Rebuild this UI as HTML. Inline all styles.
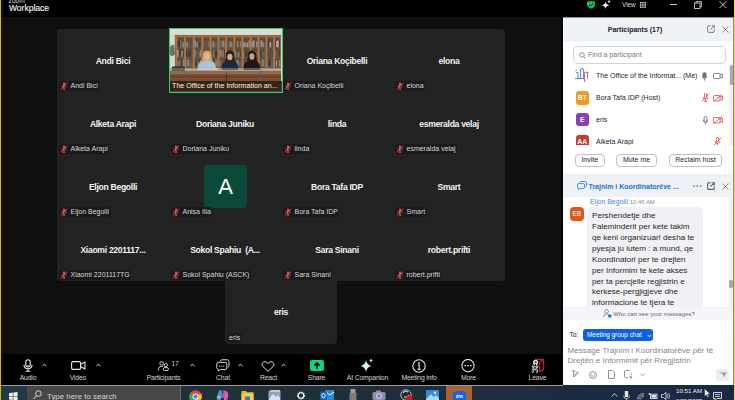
<!DOCTYPE html>
<html><head><meta charset="utf-8">
<style>
*{margin:0;padding:0;box-sizing:border-box}
html,body{width:735px;height:400px;overflow:hidden;background:#0f0f0f;font-family:"Liberation Sans",sans-serif;position:relative}
.a{position:absolute}
#top{left:0;top:0;width:735px;height:17px;background:#000}
#grid{left:57px;top:29px;width:448px;height:252px;background:#232323;border-radius:4px}
#eris{left:225px;top:276px;width:112px;height:68px;background:#232323;border-radius:0 0 4px 4px}
.tn{position:absolute;text-align:center;color:#f2f2f2;font-weight:bold;font-size:8.6px;line-height:10px;letter-spacing:-0.3px;white-space:nowrap}
.lb{position:absolute;height:10.5px;background:#1a1a1a;border-radius:3px;color:#d8d8d8;font-size:7px;line-height:10.5px;padding:0 1.5px 0 0;white-space:nowrap;display:flex;align-items:center}
.lb .mo{margin:0 2.5px 0 1px;flex:none}
.av{position:absolute;width:43px;height:43px;background:#0b4a3a;border-radius:4px;color:#fff;font-size:22px;line-height:43px;text-align:center}
#tb{left:0;top:354px;width:563px;height:31px;background:#000}
.tl{position:absolute;color:#d4d4d4;font-size:6.8px;line-height:8px;letter-spacing:-0.15px;white-space:nowrap;text-align:center}
#task{left:0;top:385px;width:735px;height:15px;background:#1d2a38}
#panel{left:563px;top:17px;width:170px;height:368px;background:#fff}
.ptx{color:#232333;font-size:7px;line-height:9px;white-space:nowrap}
.pav{width:13.5px;height:13.5px;border-radius:3px;color:#fff;font-weight:bold;font-size:6.8px;line-height:13.5px;text-align:center}
.pbtn{height:12.5px;border:1px solid #bfc0c8;border-radius:4px;color:#232333;font-size:7px;line-height:10.5px;text-align:center;white-space:nowrap}
.yl{background:#e3c400}
</style></head><body>
<div id="top" class="a"></div>

<div class="a" style="left:8.6px;top:-2.9px;color:#ddd;font-size:6.6px;line-height:7px">zoom</div>
<div class="a" style="left:9px;top:2.8px;color:#f0f0f0;font-size:8.5px;line-height:10px;-webkit-text-stroke:0.15px #f0f0f0">Workplace</div>
<svg class="a" style="left:586px;top:0.5px" width="10" height="8" viewBox="0 0 10 8"><path d="M5 0 Q7.4 1 9 0.8 V3.6 Q8.6 6.6 5 7.8 Q1.4 6.6 1 3.6 V0.8 Q2.6 1 5 0Z" fill="#1ec55a"/><path d="M3 3.8 L4.5 5.2 L7.2 2.4" stroke="#000" stroke-width="1" fill="none"/></svg>
<svg class="a" style="left:601px;top:0px" width="10" height="9" viewBox="0 0 10 9"><path d="M4.5 1.4 Q5 4.6 8.4 5.2 Q5 5.8 4.5 9 Q4 5.8 0.6 5.2 Q4 4.6 4.5 1.4Z" fill="#f4f4f4"/><path d="M8 0 Q8.3 1.3 9.6 1.6 Q8.3 1.9 8 3.2 Q7.7 1.9 6.4 1.6 Q7.7 1.3 8 0Z" fill="#f4f4f4"/></svg>
<div class="a" style="left:622px;top:0.8px;color:#d8d8d8;font-size:6.4px;line-height:7px">View</div>
<svg class="a" style="left:639.8px;top:1.6px" width="6" height="6" viewBox="0 0 6 6" fill="#ddd"><rect x="0" y="0" width="1.5" height="1.5"/><rect x="2.2" y="0" width="1.5" height="1.5"/><rect x="4.4" y="0" width="1.5" height="1.5"/><rect x="0" y="2.2" width="1.5" height="1.5"/><rect x="2.2" y="2.2" width="1.5" height="1.5"/><rect x="4.4" y="2.2" width="1.5" height="1.5"/><rect x="0" y="4.4" width="1.5" height="1.5"/><rect x="2.2" y="4.4" width="1.5" height="1.5"/><rect x="4.4" y="4.4" width="1.5" height="1.5"/></svg>
<div class="a" style="left:670px;top:4px;width:7px;height:1px;background:#ccc"></div>
<svg class="a" style="left:694px;top:1px" width="8" height="8" viewBox="0 0 8 8"><rect x="0.5" y="2" width="5.5" height="5.5" fill="none" stroke="#ccc" stroke-width="0.9"/><path d="M2 2 V0.6 H7.4 V6 H6" fill="none" stroke="#ccc" stroke-width="0.9"/></svg>
<svg class="a" style="left:719px;top:1px" width="8" height="7" viewBox="0 0 8 7"><path d="M0.5 0.2 L7.3 7 M7.3 0.2 L0.5 7" stroke="#ddd" stroke-width="0.9"/></svg>

<div id="grid" class="a"></div>
<div id="eris" class="a"></div>
<div class="tn" style="left:57px;top:55.5px;width:112px">Andi Bici</div>
<div class="lb" style="left:59px;top:80.5px"><svg class="mo" width="8" height="8" viewBox="0 0 8 8"><path d="M3 0.8 Q4 0 5 0.8 L5 3.6 Q4 4.6 3 3.6 Z" fill="#e0504e"/><path d="M1.8 3.2 Q2 5.4 4 5.5 Q6 5.4 6.2 3.2 M4 5.5 V7.3 M2.6 7.3 H5.4" stroke="#e0504e" stroke-width="0.9" fill="none"/><path d="M1 7.2 L7.2 0.6" stroke="#e0504e" stroke-width="1"/></svg><span>Andi Bici</span></div>
<div class="tn" style="left:281px;top:55.5px;width:112px">Oriana Koçibelli</div>
<div class="lb" style="left:283px;top:80.5px"><svg class="mo" width="8" height="8" viewBox="0 0 8 8"><path d="M3 0.8 Q4 0 5 0.8 L5 3.6 Q4 4.6 3 3.6 Z" fill="#e0504e"/><path d="M1.8 3.2 Q2 5.4 4 5.5 Q6 5.4 6.2 3.2 M4 5.5 V7.3 M2.6 7.3 H5.4" stroke="#e0504e" stroke-width="0.9" fill="none"/><path d="M1 7.2 L7.2 0.6" stroke="#e0504e" stroke-width="1"/></svg><span>Oriana Koçibelli</span></div>
<div class="tn" style="left:393px;top:55.5px;width:112px">elona</div>
<div class="lb" style="left:395px;top:80.5px"><svg class="mo" width="8" height="8" viewBox="0 0 8 8"><path d="M3 0.8 Q4 0 5 0.8 L5 3.6 Q4 4.6 3 3.6 Z" fill="#e0504e"/><path d="M1.8 3.2 Q2 5.4 4 5.5 Q6 5.4 6.2 3.2 M4 5.5 V7.3 M2.6 7.3 H5.4" stroke="#e0504e" stroke-width="0.9" fill="none"/><path d="M1 7.2 L7.2 0.6" stroke="#e0504e" stroke-width="1"/></svg><span>elona</span></div>
<div class="tn" style="left:57px;top:118.5px;width:112px">Alketa Arapi</div>
<div class="lb" style="left:59px;top:143.5px"><svg class="mo" width="8" height="8" viewBox="0 0 8 8"><path d="M3 0.8 Q4 0 5 0.8 L5 3.6 Q4 4.6 3 3.6 Z" fill="#e0504e"/><path d="M1.8 3.2 Q2 5.4 4 5.5 Q6 5.4 6.2 3.2 M4 5.5 V7.3 M2.6 7.3 H5.4" stroke="#e0504e" stroke-width="0.9" fill="none"/><path d="M1 7.2 L7.2 0.6" stroke="#e0504e" stroke-width="1"/></svg><span>Alketa Arapi</span></div>
<div class="tn" style="left:169px;top:118.5px;width:112px">Doriana Juniku</div>
<div class="lb" style="left:171px;top:143.5px"><svg class="mo" width="8" height="8" viewBox="0 0 8 8"><path d="M3 0.8 Q4 0 5 0.8 L5 3.6 Q4 4.6 3 3.6 Z" fill="#e0504e"/><path d="M1.8 3.2 Q2 5.4 4 5.5 Q6 5.4 6.2 3.2 M4 5.5 V7.3 M2.6 7.3 H5.4" stroke="#e0504e" stroke-width="0.9" fill="none"/><path d="M1 7.2 L7.2 0.6" stroke="#e0504e" stroke-width="1"/></svg><span>Doriana Juniku</span></div>
<div class="tn" style="left:281px;top:118.5px;width:112px">linda</div>
<div class="lb" style="left:283px;top:143.5px"><svg class="mo" width="8" height="8" viewBox="0 0 8 8"><path d="M3 0.8 Q4 0 5 0.8 L5 3.6 Q4 4.6 3 3.6 Z" fill="#e0504e"/><path d="M1.8 3.2 Q2 5.4 4 5.5 Q6 5.4 6.2 3.2 M4 5.5 V7.3 M2.6 7.3 H5.4" stroke="#e0504e" stroke-width="0.9" fill="none"/><path d="M1 7.2 L7.2 0.6" stroke="#e0504e" stroke-width="1"/></svg><span>linda</span></div>
<div class="tn" style="left:393px;top:118.5px;width:112px">esmeralda velaj</div>
<div class="lb" style="left:395px;top:143.5px"><svg class="mo" width="8" height="8" viewBox="0 0 8 8"><path d="M3 0.8 Q4 0 5 0.8 L5 3.6 Q4 4.6 3 3.6 Z" fill="#e0504e"/><path d="M1.8 3.2 Q2 5.4 4 5.5 Q6 5.4 6.2 3.2 M4 5.5 V7.3 M2.6 7.3 H5.4" stroke="#e0504e" stroke-width="0.9" fill="none"/><path d="M1 7.2 L7.2 0.6" stroke="#e0504e" stroke-width="1"/></svg><span>esmeralda velaj</span></div>
<div class="tn" style="left:57px;top:181.5px;width:112px">Eljon Begolli</div>
<div class="lb" style="left:59px;top:206.5px"><svg class="mo" width="8" height="8" viewBox="0 0 8 8"><path d="M3 0.8 Q4 0 5 0.8 L5 3.6 Q4 4.6 3 3.6 Z" fill="#e0504e"/><path d="M1.8 3.2 Q2 5.4 4 5.5 Q6 5.4 6.2 3.2 M4 5.5 V7.3 M2.6 7.3 H5.4" stroke="#e0504e" stroke-width="0.9" fill="none"/><path d="M1 7.2 L7.2 0.6" stroke="#e0504e" stroke-width="1"/></svg><span>Eljon Begolli</span></div>
<div class="av" style="left:204px;top:165px">A</div>
<div class="lb" style="left:171px;top:206.5px"><svg class="mo" width="8" height="8" viewBox="0 0 8 8"><path d="M3 0.8 Q4 0 5 0.8 L5 3.6 Q4 4.6 3 3.6 Z" fill="#e0504e"/><path d="M1.8 3.2 Q2 5.4 4 5.5 Q6 5.4 6.2 3.2 M4 5.5 V7.3 M2.6 7.3 H5.4" stroke="#e0504e" stroke-width="0.9" fill="none"/><path d="M1 7.2 L7.2 0.6" stroke="#e0504e" stroke-width="1"/></svg><span>Anisa Ilia</span></div>
<div class="tn" style="left:281px;top:181.5px;width:112px">Bora Tafa IDP</div>
<div class="lb" style="left:283px;top:206.5px"><svg class="mo" width="8" height="8" viewBox="0 0 8 8"><path d="M3 0.8 Q4 0 5 0.8 L5 3.6 Q4 4.6 3 3.6 Z" fill="#e0504e"/><path d="M1.8 3.2 Q2 5.4 4 5.5 Q6 5.4 6.2 3.2 M4 5.5 V7.3 M2.6 7.3 H5.4" stroke="#e0504e" stroke-width="0.9" fill="none"/><path d="M1 7.2 L7.2 0.6" stroke="#e0504e" stroke-width="1"/></svg><span>Bora Tafa IDP</span></div>
<div class="tn" style="left:393px;top:181.5px;width:112px">Smart</div>
<div class="lb" style="left:395px;top:206.5px"><svg class="mo" width="8" height="8" viewBox="0 0 8 8"><path d="M3 0.8 Q4 0 5 0.8 L5 3.6 Q4 4.6 3 3.6 Z" fill="#e0504e"/><path d="M1.8 3.2 Q2 5.4 4 5.5 Q6 5.4 6.2 3.2 M4 5.5 V7.3 M2.6 7.3 H5.4" stroke="#e0504e" stroke-width="0.9" fill="none"/><path d="M1 7.2 L7.2 0.6" stroke="#e0504e" stroke-width="1"/></svg><span>Smart</span></div>
<div class="tn" style="left:57px;top:244.5px;width:112px">Xiaomi 2201117...</div>
<div class="lb" style="left:59px;top:269.5px"><svg class="mo" width="8" height="8" viewBox="0 0 8 8"><path d="M3 0.8 Q4 0 5 0.8 L5 3.6 Q4 4.6 3 3.6 Z" fill="#e0504e"/><path d="M1.8 3.2 Q2 5.4 4 5.5 Q6 5.4 6.2 3.2 M4 5.5 V7.3 M2.6 7.3 H5.4" stroke="#e0504e" stroke-width="0.9" fill="none"/><path d="M1 7.2 L7.2 0.6" stroke="#e0504e" stroke-width="1"/></svg><span>Xiaomi 2201117TG</span></div>
<div class="tn" style="left:169px;top:244.5px;width:112px">Sokol Spahiu&nbsp; (A...</div>
<div class="lb" style="left:171px;top:269.5px"><svg class="mo" width="8" height="8" viewBox="0 0 8 8"><path d="M3 0.8 Q4 0 5 0.8 L5 3.6 Q4 4.6 3 3.6 Z" fill="#e0504e"/><path d="M1.8 3.2 Q2 5.4 4 5.5 Q6 5.4 6.2 3.2 M4 5.5 V7.3 M2.6 7.3 H5.4" stroke="#e0504e" stroke-width="0.9" fill="none"/><path d="M1 7.2 L7.2 0.6" stroke="#e0504e" stroke-width="1"/></svg><span>Sokol Spahiu (ASCK)</span></div>
<div class="tn" style="left:281px;top:244.5px;width:112px">Sara Sinani</div>
<div class="lb" style="left:283px;top:269.5px"><svg class="mo" width="8" height="8" viewBox="0 0 8 8"><path d="M3 0.8 Q4 0 5 0.8 L5 3.6 Q4 4.6 3 3.6 Z" fill="#e0504e"/><path d="M1.8 3.2 Q2 5.4 4 5.5 Q6 5.4 6.2 3.2 M4 5.5 V7.3 M2.6 7.3 H5.4" stroke="#e0504e" stroke-width="0.9" fill="none"/><path d="M1 7.2 L7.2 0.6" stroke="#e0504e" stroke-width="1"/></svg><span>Sara Sinani</span></div>
<div class="tn" style="left:393px;top:244.5px;width:112px">robert.prifti</div>
<div class="lb" style="left:395px;top:269.5px"><svg class="mo" width="8" height="8" viewBox="0 0 8 8"><path d="M3 0.8 Q4 0 5 0.8 L5 3.6 Q4 4.6 3 3.6 Z" fill="#e0504e"/><path d="M1.8 3.2 Q2 5.4 4 5.5 Q6 5.4 6.2 3.2 M4 5.5 V7.3 M2.6 7.3 H5.4" stroke="#e0504e" stroke-width="0.9" fill="none"/><path d="M1 7.2 L7.2 0.6" stroke="#e0504e" stroke-width="1"/></svg><span>robert.prifti</span></div>
<div class="a" style="left:168.5px;top:28px;width:114px;height:65px;border:1.6px solid #25d464;overflow:hidden;background:#d4d4d2">
<svg width="111" height="62" viewBox="170.1 29.6 111 62" style="position:absolute;left:0;top:0">
<rect x="169" y="29" width="113" height="64" fill="#d6d6d4"/>
<rect x="169" y="29" width="113" height="6" fill="#dedcd8"/>
<rect x="175" y="36" width="107" height="33" fill="#5a4c3e"/><rect x="177.0" y="41.0" width="1.0" height="7" fill="#6a5a44" opacity="0.7"/><rect x="178.0" y="42.0" width="1.0" height="6" fill="#2e2c2a" opacity="0.7"/><rect x="179.0" y="41.0" width="1.4" height="7" fill="#2e2c2a" opacity="0.7"/><rect x="180.4" y="41.0" width="1.0" height="7" fill="#a8a8a4" opacity="0.7"/><rect x="181.4" y="42.0" width="1.4" height="6" fill="#6a5a44" opacity="0.7"/><rect x="182.8" y="43.0" width="1.0" height="5" fill="#d0d0cc" opacity="0.7"/><rect x="177.0" y="48.0" width="7.2" height="1" fill="#6a5a40"/><rect x="177.0" y="50.5" width="1.8" height="7" fill="#d0d0cc" opacity="0.7"/><rect x="178.8" y="50.5" width="1.4" height="7" fill="#3a3a3a" opacity="0.7"/><rect x="180.2" y="50.5" width="1.0" height="7" fill="#3a3a3a" opacity="0.7"/><rect x="181.2" y="51.5" width="1.8" height="6" fill="#a8a8a4" opacity="0.7"/><rect x="183.0" y="52.5" width="1.2" height="5" fill="#3a3a3a" opacity="0.7"/><rect x="177.0" y="57.5" width="7.2" height="1" fill="#6a5a40"/><rect x="177.0" y="62.0" width="1.8" height="5" fill="#5a5e66" opacity="0.7"/><rect x="178.8" y="61.0" width="1.0" height="6" fill="#d0d0cc" opacity="0.7"/><rect x="179.8" y="60.0" width="1.8" height="7" fill="#4a5060" opacity="0.7"/><rect x="181.6" y="61.0" width="1.8" height="6" fill="#4a5060" opacity="0.7"/><rect x="183.4" y="60.0" width="0.8" height="7" fill="#d0d0cc" opacity="0.7"/><rect x="177.0" y="67.0" width="7.2" height="1" fill="#6a5a40"/><rect x="185.8" y="42.0" width="1.0" height="6" fill="#6a7a8a" opacity="0.7"/><rect x="186.8" y="43.0" width="1.0" height="5" fill="#d0d0cc" opacity="0.7"/><rect x="187.8" y="42.0" width="1.0" height="6" fill="#7a6850" opacity="0.7"/><rect x="188.8" y="41.0" width="1.4" height="7" fill="#5a5e66" opacity="0.7"/><rect x="190.2" y="41.0" width="1.4" height="7" fill="#4a5060" opacity="0.7"/><rect x="191.6" y="42.0" width="1.2" height="6" fill="#6a5a44" opacity="0.7"/><rect x="185.8" y="48.0" width="7.0" height="1" fill="#6a5a40"/><rect x="185.8" y="51.5" width="1.8" height="6" fill="#2e2c2a" opacity="0.7"/><rect x="187.6" y="51.5" width="1.0" height="6" fill="#7a6850" opacity="0.7"/><rect x="188.6" y="51.5" width="1.0" height="6" fill="#2e2c2a" opacity="0.7"/><rect x="189.6" y="50.5" width="1.8" height="7" fill="#3a3a3a" opacity="0.7"/><rect x="191.4" y="51.5" width="1.4" height="6" fill="#6a5a44" opacity="0.7"/><rect x="185.8" y="57.5" width="7.0" height="1" fill="#6a5a40"/><rect x="185.8" y="60.0" width="1.8" height="7" fill="#6a7a8a" opacity="0.7"/><rect x="187.6" y="60.0" width="1.8" height="7" fill="#b8a070" opacity="0.7"/><rect x="189.4" y="60.0" width="1.8" height="7" fill="#5a5e66" opacity="0.7"/><rect x="191.2" y="62.0" width="1.4" height="5" fill="#6a7a8a" opacity="0.7"/><rect x="185.8" y="67.0" width="7.0" height="1" fill="#6a5a40"/><rect x="194.4" y="41.0" width="1.4" height="7" fill="#d0d0cc" opacity="0.7"/><rect x="195.8" y="42.0" width="1.0" height="6" fill="#6a7a8a" opacity="0.7"/><rect x="196.8" y="43.0" width="1.4" height="5" fill="#a8a8a4" opacity="0.7"/><rect x="198.2" y="42.0" width="1.4" height="6" fill="#4a5060" opacity="0.7"/><rect x="199.6" y="43.0" width="1.0" height="5" fill="#2e2c2a" opacity="0.7"/><rect x="200.6" y="43.0" width="0.8" height="5" fill="#4a5060" opacity="0.7"/><rect x="194.4" y="48.0" width="7.0" height="1" fill="#6a5a40"/><rect x="194.4" y="50.5" width="1.8" height="7" fill="#8a8a84" opacity="0.7"/><rect x="196.2" y="51.5" width="1.8" height="6" fill="#6a5a44" opacity="0.7"/><rect x="198.0" y="52.5" width="1.0" height="5" fill="#5a5e66" opacity="0.7"/><rect x="199.0" y="52.5" width="1.0" height="5" fill="#6a7a8a" opacity="0.7"/><rect x="200.0" y="50.5" width="1.4" height="7" fill="#a8a8a4" opacity="0.7"/><rect x="194.4" y="57.5" width="7.0" height="1" fill="#6a5a40"/><rect x="194.4" y="61.0" width="1.0" height="6" fill="#5a5e66" opacity="0.7"/><rect x="195.4" y="61.0" width="1.8" height="6" fill="#3a3a3a" opacity="0.7"/><rect x="197.2" y="62.0" width="1.8" height="5" fill="#8a8a84" opacity="0.7"/><rect x="199.0" y="61.0" width="1.4" height="6" fill="#3a3a3a" opacity="0.7"/><rect x="200.4" y="61.0" width="1.0" height="6" fill="#d0d0cc" opacity="0.7"/><rect x="194.4" y="67.0" width="7.0" height="1" fill="#6a5a40"/><rect x="203.0" y="42.0" width="1.8" height="6" fill="#7a6850" opacity="0.7"/><rect x="204.8" y="41.0" width="1.8" height="7" fill="#6a5a44" opacity="0.7"/><rect x="206.6" y="41.0" width="1.0" height="7" fill="#6a5a44" opacity="0.7"/><rect x="207.6" y="42.0" width="1.4" height="6" fill="#7a6850" opacity="0.7"/><rect x="209.0" y="41.0" width="0.6" height="7" fill="#b8a070" opacity="0.7"/><rect x="203.0" y="48.0" width="6.6" height="1" fill="#6a5a40"/><rect x="203.0" y="51.5" width="1.4" height="6" fill="#5a5e66" opacity="0.7"/><rect x="204.4" y="51.5" width="1.8" height="6" fill="#6a5a44" opacity="0.7"/><rect x="206.2" y="52.5" width="1.4" height="5" fill="#4a5060" opacity="0.7"/><rect x="207.6" y="51.5" width="1.8" height="6" fill="#a8a8a4" opacity="0.7"/><rect x="203.0" y="57.5" width="6.6" height="1" fill="#6a5a40"/><rect x="203.0" y="60.0" width="1.4" height="7" fill="#2e2c2a" opacity="0.7"/><rect x="204.4" y="62.0" width="1.8" height="5" fill="#a8a8a4" opacity="0.7"/><rect x="206.2" y="60.0" width="1.8" height="7" fill="#8a8a84" opacity="0.7"/><rect x="208.0" y="61.0" width="1.4" height="6" fill="#7a6850" opacity="0.7"/><rect x="203.0" y="67.0" width="6.6" height="1" fill="#6a5a40"/><rect x="211.2" y="41.0" width="1.4" height="7" fill="#5a5e66" opacity="0.7"/><rect x="212.6" y="42.0" width="1.8" height="6" fill="#a8a8a4" opacity="0.7"/><rect x="214.4" y="43.0" width="1.8" height="5" fill="#7a6850" opacity="0.7"/><rect x="216.2" y="42.0" width="1.0" height="6" fill="#5a5e66" opacity="0.7"/><rect x="211.2" y="48.0" width="6.4" height="1" fill="#6a5a40"/><rect x="211.2" y="51.5" width="1.8" height="6" fill="#5a5e66" opacity="0.7"/><rect x="213.0" y="50.5" width="1.8" height="7" fill="#8a8a84" opacity="0.7"/><rect x="214.8" y="51.5" width="1.0" height="6" fill="#3a3a3a" opacity="0.7"/><rect x="215.8" y="51.5" width="1.4" height="6" fill="#2e2c2a" opacity="0.7"/><rect x="211.2" y="57.5" width="6.4" height="1" fill="#6a5a40"/><rect x="211.2" y="61.0" width="1.4" height="6" fill="#4a5060" opacity="0.7"/><rect x="212.6" y="62.0" width="1.0" height="5" fill="#2e2c2a" opacity="0.7"/><rect x="213.6" y="60.0" width="1.8" height="7" fill="#3a3a3a" opacity="0.7"/><rect x="215.4" y="60.0" width="1.4" height="7" fill="#b8a070" opacity="0.7"/><rect x="216.8" y="61.0" width="0.8" height="6" fill="#b8a070" opacity="0.7"/><rect x="211.2" y="67.0" width="6.4" height="1" fill="#6a5a40"/><rect x="219.2" y="43.0" width="1.4" height="5" fill="#7a6850" opacity="0.7"/><rect x="220.6" y="41.0" width="1.4" height="7" fill="#6a7a8a" opacity="0.7"/><rect x="222.0" y="41.0" width="1.0" height="7" fill="#8a8a84" opacity="0.7"/><rect x="223.0" y="41.0" width="1.4" height="7" fill="#b8a070" opacity="0.7"/><rect x="224.4" y="43.0" width="0.8" height="5" fill="#6a7a8a" opacity="0.7"/><rect x="219.2" y="48.0" width="6.0" height="1" fill="#6a5a40"/><rect x="219.2" y="50.5" width="1.4" height="7" fill="#7a6850" opacity="0.7"/><rect x="220.6" y="50.5" width="1.0" height="7" fill="#d0d0cc" opacity="0.7"/><rect x="221.6" y="52.5" width="1.4" height="5" fill="#6a7a8a" opacity="0.7"/><rect x="223.0" y="50.5" width="1.0" height="7" fill="#b8a070" opacity="0.7"/><rect x="224.0" y="50.5" width="1.2" height="7" fill="#3a3a3a" opacity="0.7"/><rect x="219.2" y="57.5" width="6.0" height="1" fill="#6a5a40"/><rect x="219.2" y="61.0" width="1.4" height="6" fill="#7a6850" opacity="0.7"/><rect x="220.6" y="60.0" width="1.0" height="7" fill="#8a8a84" opacity="0.7"/><rect x="221.6" y="62.0" width="1.8" height="5" fill="#4a5060" opacity="0.7"/><rect x="223.4" y="60.0" width="1.4" height="7" fill="#5a5e66" opacity="0.7"/><rect x="219.2" y="67.0" width="6.0" height="1" fill="#6a5a40"/><rect x="226.8" y="42.0" width="1.4" height="6" fill="#7a6850" opacity="0.7"/><rect x="228.2" y="42.0" width="1.4" height="6" fill="#4a5060" opacity="0.7"/><rect x="229.6" y="42.0" width="1.8" height="6" fill="#a8a8a4" opacity="0.7"/><rect x="231.4" y="43.0" width="1.4" height="5" fill="#b8a070" opacity="0.7"/><rect x="232.8" y="42.0" width="0.6" height="6" fill="#2e2c2a" opacity="0.7"/><rect x="226.8" y="48.0" width="6.6" height="1" fill="#6a5a40"/><rect x="226.8" y="51.5" width="1.8" height="6" fill="#6a5a44" opacity="0.7"/><rect x="228.6" y="52.5" width="1.8" height="5" fill="#a8a8a4" opacity="0.7"/><rect x="230.4" y="51.5" width="1.8" height="6" fill="#7a6850" opacity="0.7"/><rect x="232.2" y="50.5" width="1.2" height="7" fill="#5a5e66" opacity="0.7"/><rect x="226.8" y="57.5" width="6.6" height="1" fill="#6a5a40"/><rect x="226.8" y="61.0" width="1.8" height="6" fill="#b8a070" opacity="0.7"/><rect x="228.6" y="60.0" width="1.0" height="7" fill="#5a5e66" opacity="0.7"/><rect x="229.6" y="62.0" width="1.0" height="5" fill="#a8a8a4" opacity="0.7"/><rect x="230.6" y="60.0" width="1.0" height="7" fill="#6a5a44" opacity="0.7"/><rect x="231.6" y="61.0" width="1.0" height="6" fill="#2e2c2a" opacity="0.7"/><rect x="232.6" y="62.0" width="0.8" height="5" fill="#d0d0cc" opacity="0.7"/><rect x="226.8" y="67.0" width="6.6" height="1" fill="#6a5a40"/><rect x="235.0" y="43.0" width="1.8" height="5" fill="#3a3a3a" opacity="0.7"/><rect x="236.8" y="42.0" width="1.8" height="6" fill="#b8a070" opacity="0.7"/><rect x="238.6" y="43.0" width="1.8" height="5" fill="#6a5a44" opacity="0.7"/><rect x="240.4" y="42.0" width="1.2" height="6" fill="#a8a8a4" opacity="0.7"/><rect x="235.0" y="48.0" width="6.6" height="1" fill="#6a5a40"/><rect x="235.0" y="52.5" width="1.8" height="5" fill="#8a8a84" opacity="0.7"/><rect x="236.8" y="51.5" width="1.0" height="6" fill="#6a5a44" opacity="0.7"/><rect x="237.8" y="52.5" width="1.4" height="5" fill="#8a8a84" opacity="0.7"/><rect x="239.2" y="52.5" width="1.0" height="5" fill="#6a7a8a" opacity="0.7"/><rect x="240.2" y="52.5" width="1.4" height="5" fill="#3a3a3a" opacity="0.7"/><rect x="235.0" y="57.5" width="6.6" height="1" fill="#6a5a40"/><rect x="235.0" y="61.0" width="1.0" height="6" fill="#3a3a3a" opacity="0.7"/><rect x="236.0" y="61.0" width="1.0" height="6" fill="#7a6850" opacity="0.7"/><rect x="237.0" y="61.0" width="1.8" height="6" fill="#a8a8a4" opacity="0.7"/><rect x="238.8" y="62.0" width="1.4" height="5" fill="#5a5e66" opacity="0.7"/><rect x="240.2" y="60.0" width="1.4" height="7" fill="#6a5a44" opacity="0.7"/><rect x="235.0" y="67.0" width="6.6" height="1" fill="#6a5a40"/><rect x="243.2" y="43.0" width="1.4" height="5" fill="#d0d0cc" opacity="0.7"/><rect x="244.6" y="43.0" width="1.4" height="5" fill="#a8a8a4" opacity="0.7"/><rect x="246.0" y="43.0" width="1.0" height="5" fill="#6a7a8a" opacity="0.7"/><rect x="247.0" y="43.0" width="1.0" height="5" fill="#d0d0cc" opacity="0.7"/><rect x="248.0" y="41.0" width="1.0" height="7" fill="#6a7a8a" opacity="0.7"/><rect x="249.0" y="41.0" width="0.8" height="7" fill="#d0d0cc" opacity="0.7"/><rect x="243.2" y="48.0" width="6.6" height="1" fill="#6a5a40"/><rect x="243.2" y="52.5" width="1.4" height="5" fill="#8a8a84" opacity="0.7"/><rect x="244.6" y="51.5" width="1.0" height="6" fill="#4a5060" opacity="0.7"/><rect x="245.6" y="51.5" width="1.8" height="6" fill="#2e2c2a" opacity="0.7"/><rect x="247.4" y="51.5" width="1.4" height="6" fill="#5a5e66" opacity="0.7"/><rect x="248.8" y="51.5" width="1.0" height="6" fill="#4a5060" opacity="0.7"/><rect x="243.2" y="57.5" width="6.6" height="1" fill="#6a5a40"/><rect x="243.2" y="62.0" width="1.0" height="5" fill="#6a5a44" opacity="0.7"/><rect x="244.2" y="60.0" width="1.0" height="7" fill="#4a5060" opacity="0.7"/><rect x="245.2" y="60.0" width="1.0" height="7" fill="#3a3a3a" opacity="0.7"/><rect x="246.2" y="61.0" width="1.0" height="6" fill="#d0d0cc" opacity="0.7"/><rect x="247.2" y="60.0" width="1.8" height="7" fill="#6a5a44" opacity="0.7"/><rect x="249.0" y="60.0" width="0.8" height="7" fill="#a8a8a4" opacity="0.7"/><rect x="243.2" y="67.0" width="6.6" height="1" fill="#6a5a40"/><rect x="251.4" y="42.0" width="1.8" height="6" fill="#a8a8a4" opacity="0.7"/><rect x="253.2" y="41.0" width="1.4" height="7" fill="#d0d0cc" opacity="0.7"/><rect x="254.6" y="42.0" width="1.8" height="6" fill="#4a5060" opacity="0.7"/><rect x="256.4" y="42.0" width="1.2" height="6" fill="#d0d0cc" opacity="0.7"/><rect x="251.4" y="48.0" width="6.2" height="1" fill="#6a5a40"/><rect x="251.4" y="52.5" width="1.0" height="5" fill="#b8a070" opacity="0.7"/><rect x="252.4" y="51.5" width="1.8" height="6" fill="#2e2c2a" opacity="0.7"/><rect x="254.2" y="51.5" width="1.0" height="6" fill="#b8a070" opacity="0.7"/><rect x="255.2" y="52.5" width="1.4" height="5" fill="#a8a8a4" opacity="0.7"/><rect x="256.6" y="51.5" width="1.0" height="6" fill="#6a5a44" opacity="0.7"/><rect x="251.4" y="57.5" width="6.2" height="1" fill="#6a5a40"/><rect x="251.4" y="62.0" width="1.4" height="5" fill="#d0d0cc" opacity="0.7"/><rect x="252.8" y="62.0" width="1.8" height="5" fill="#7a6850" opacity="0.7"/><rect x="254.6" y="61.0" width="1.8" height="6" fill="#7a6850" opacity="0.7"/><rect x="256.4" y="60.0" width="1.0" height="7" fill="#8a8a84" opacity="0.7"/><rect x="251.4" y="67.0" width="6.2" height="1" fill="#6a5a40"/><rect x="259.2" y="41.0" width="1.8" height="7" fill="#6a7a8a" opacity="0.7"/><rect x="261.0" y="41.0" width="1.8" height="7" fill="#a8a8a4" opacity="0.7"/><rect x="262.8" y="43.0" width="1.4" height="5" fill="#b8a070" opacity="0.7"/><rect x="264.2" y="43.0" width="1.4" height="5" fill="#6a5a44" opacity="0.7"/><rect x="259.2" y="48.0" width="6.4" height="1" fill="#6a5a40"/><rect x="259.2" y="50.5" width="1.0" height="7" fill="#6a7a8a" opacity="0.7"/><rect x="260.2" y="51.5" width="1.8" height="6" fill="#3a3a3a" opacity="0.7"/><rect x="262.0" y="51.5" width="1.0" height="6" fill="#6a7a8a" opacity="0.7"/><rect x="263.0" y="52.5" width="1.0" height="5" fill="#7a6850" opacity="0.7"/><rect x="264.0" y="50.5" width="1.4" height="7" fill="#5a5e66" opacity="0.7"/><rect x="259.2" y="57.5" width="6.4" height="1" fill="#6a5a40"/><rect x="259.2" y="61.0" width="1.8" height="6" fill="#6a7a8a" opacity="0.7"/><rect x="261.0" y="60.0" width="1.0" height="7" fill="#6a5a44" opacity="0.7"/><rect x="262.0" y="60.0" width="1.8" height="7" fill="#b8a070" opacity="0.7"/><rect x="263.8" y="60.0" width="1.0" height="7" fill="#6a7a8a" opacity="0.7"/><rect x="264.8" y="62.0" width="0.8" height="5" fill="#6a5a44" opacity="0.7"/><rect x="259.2" y="67.0" width="6.4" height="1" fill="#6a5a40"/><rect x="267.2" y="41.0" width="1.4" height="7" fill="#3a3a3a" opacity="0.7"/><rect x="268.6" y="43.0" width="1.0" height="5" fill="#3a3a3a" opacity="0.7"/><rect x="269.6" y="43.0" width="1.8" height="5" fill="#d0d0cc" opacity="0.7"/><rect x="271.4" y="41.0" width="1.8" height="7" fill="#4a5060" opacity="0.7"/><rect x="267.2" y="48.0" width="6.0" height="1" fill="#6a5a40"/><rect x="267.2" y="51.5" width="1.4" height="6" fill="#2e2c2a" opacity="0.7"/><rect x="268.6" y="51.5" width="1.4" height="6" fill="#6a5a44" opacity="0.7"/><rect x="270.0" y="52.5" width="1.4" height="5" fill="#4a5060" opacity="0.7"/><rect x="271.4" y="52.5" width="1.8" height="5" fill="#4a5060" opacity="0.7"/><rect x="267.2" y="57.5" width="6.0" height="1" fill="#6a5a40"/><rect x="267.2" y="62.0" width="1.8" height="5" fill="#4a5060" opacity="0.7"/><rect x="269.0" y="60.0" width="1.8" height="7" fill="#2e2c2a" opacity="0.7"/><rect x="270.8" y="60.0" width="1.8" height="7" fill="#7a6850" opacity="0.7"/><rect x="272.6" y="62.0" width="0.6" height="5" fill="#7a6850" opacity="0.7"/><rect x="267.2" y="67.0" width="6.0" height="1" fill="#6a5a40"/><rect x="274.8" y="43.0" width="1.4" height="5" fill="#3a3a3a" opacity="0.7"/><rect x="276.2" y="42.0" width="1.0" height="6" fill="#d0d0cc" opacity="0.7"/><rect x="277.2" y="41.0" width="1.8" height="7" fill="#d0d0cc" opacity="0.7"/><rect x="279.0" y="41.0" width="1.4" height="7" fill="#3a3a3a" opacity="0.7"/><rect x="274.8" y="48.0" width="5.6" height="1" fill="#6a5a40"/><rect x="274.8" y="51.5" width="1.0" height="6" fill="#b8a070" opacity="0.7"/><rect x="275.8" y="50.5" width="1.0" height="7" fill="#6a5a44" opacity="0.7"/><rect x="276.8" y="52.5" width="1.4" height="5" fill="#6a5a44" opacity="0.7"/><rect x="278.2" y="50.5" width="1.4" height="7" fill="#4a5060" opacity="0.7"/><rect x="279.6" y="50.5" width="0.8" height="7" fill="#2e2c2a" opacity="0.7"/><rect x="274.8" y="57.5" width="5.6" height="1" fill="#6a5a40"/><rect x="274.8" y="62.0" width="1.4" height="5" fill="#5a5e66" opacity="0.7"/><rect x="276.2" y="61.0" width="1.0" height="6" fill="#d0d0cc" opacity="0.7"/><rect x="277.2" y="62.0" width="1.4" height="5" fill="#3a3a3a" opacity="0.7"/><rect x="278.6" y="61.0" width="1.8" height="6" fill="#b8a070" opacity="0.7"/><rect x="274.8" y="67.0" width="5.6" height="1" fill="#6a5a40"/><rect x="175.4" y="36" width="2" height="33" fill="#b07444"/><rect x="184.2" y="36" width="2" height="33" fill="#b07444"/><rect x="192.8" y="36" width="2" height="33" fill="#b07444"/><rect x="201.4" y="36" width="2" height="33" fill="#b07444"/><rect x="209.6" y="36" width="2" height="33" fill="#b07444"/><rect x="217.6" y="36" width="2" height="33" fill="#b07444"/><rect x="225.2" y="36" width="2" height="33" fill="#b07444"/><rect x="233.4" y="36" width="2" height="33" fill="#b07444"/><rect x="241.6" y="36" width="2" height="33" fill="#b07444"/><rect x="249.8" y="36" width="2" height="33" fill="#b07444"/><rect x="257.6" y="36" width="2" height="33" fill="#b07444"/><rect x="265.6" y="36" width="2" height="33" fill="#b07444"/><rect x="273.2" y="36" width="2" height="33" fill="#b07444"/><rect x="280.4" y="36" width="2" height="33" fill="#b07444"/><rect x="175" y="35.5" width="107" height="2.5" fill="#a06a3a"/>
<path d="M170 48 Q172 44 174.5 46 L175 55 L172 57 L170 55Z" fill="#3a4a30" opacity="0.7"/>
<rect x="172" y="67" width="13" height="6" rx="1" fill="#2a3038"/>
<g transform="translate(0,2.6)">
<path d="M197.5 70 Q197.5 60 202 59 L212 59 Q216.5 60 216.5 70Z" fill="#a8c4dc"/>
<path d="M203 55 Q202 48.5 207 48.5 Q212 48.5 211.5 55 L213.5 62 L210 59 L204 59 L200.5 62Z" fill="#c8a468"/>
<ellipse cx="207" cy="54.5" rx="2.7" ry="3.4" fill="#e0b894"/>
<path d="M221.5 68 Q221.5 60 226 59.5 L234 59.5 Q238.5 60 238.5 68Z" fill="#1c2640"/>
<path d="M226 55 Q225 48.5 230 48.5 Q235 48.5 234.5 55 L235.5 60 L224.5 60Z" fill="#2e2218"/>
<ellipse cx="230" cy="55" rx="2.6" ry="3.3" fill="#d2a888"/>
<path d="M243.5 68 Q243.5 60 248 59 L256 59 Q260.5 60 260.5 68Z" fill="#16161a"/>
<path d="M248 55 Q247 48.5 252 48.5 Q257 48.5 256.5 55 L258 63 L246 63Z" fill="#241a14"/>
<ellipse cx="252" cy="54.5" rx="2.5" ry="3.2" fill="#caa08a"/>
</g>
<rect x="169" y="68.5" width="113" height="3" fill="#8a8a88" opacity="0.6"/>
<rect x="198" y="68.8" width="20" height="2" fill="#d8d6d0" opacity="0.8"/>
<rect x="169" y="71.5" width="113" height="2.5" fill="#9a6440"/>
<rect x="169" y="74" width="113" height="20" fill="#7c4e2e"/>
<rect x="169" y="77" width="113" height="0.8" fill="#5a3620"/>
<rect x="226" y="74" width="1" height="8" fill="#4a2e1a"/>
<rect x="260.5" y="71" width="0.8" height="12" fill="#4060a0"/>
<rect x="186" y="72" width="0.8" height="10" fill="#4060a0"/>
</svg>
<div class="a" style="left:0;top:51.5px;width:112px;height:12px;background:rgba(30,22,14,0.74)"></div>
<div class="a" style="left:2.6px;top:52.2px;color:#f4f4f4;font-size:7.1px;line-height:11px;white-space:nowrap">The Office of the Information an...</div>
</div>
<div class="tn" style="left:225px;top:307px;width:112px">eris</div>
<div class="lb" style="left:227px;top:332.5px;padding:0 2px">eris</div>
<div id="tb" class="a"></div>
<svg class="a" style="left:22px;top:358.5px" width="12" height="13" viewBox="0 0 12 13"><rect x="3.8" y="0.8" width="4.4" height="7.2" rx="2.2" fill="none" stroke="#e6e6e6" stroke-width="1.1"/><path d="M5 6.6 H7" stroke="#2ecc71" stroke-width="1.2"/><path d="M2 5.8 Q2 9.6 6 9.8 Q10 9.6 10 5.8 M6 9.8 V12 M3.6 12.2 H8.4" stroke="#e6e6e6" stroke-width="1.1" fill="none"/></svg>
<div class="tl" style="left:-2.0px;top:374.2px;width:60px">Audio</div>
<svg class="a" style="left:42px;top:363px" width="5" height="4" viewBox="0 0 5 4"><path d="M0.6 3.2 L2.5 1 L4.4 3.2" stroke="#ddd" stroke-width="0.9" fill="none"/></svg>
<svg class="a" style="left:71px;top:361px" width="15" height="9" viewBox="0 0 15 9"><rect x="0.6" y="0.6" width="9" height="7.8" rx="1.4" fill="none" stroke="#e6e6e6" stroke-width="1.1"/><path d="M9.8 3.2 L14 1 V8 L9.8 5.8" fill="none" stroke="#e6e6e6" stroke-width="1.1" stroke-linejoin="round"/></svg>
<div class="tl" style="left:48.0px;top:374.2px;width:60px">Video</div>
<svg class="a" style="left:96px;top:363px" width="5" height="4" viewBox="0 0 5 4"><path d="M0.6 3.2 L2.5 1 L4.4 3.2" stroke="#ddd" stroke-width="0.9" fill="none"/></svg>
<svg class="a" style="left:158px;top:360.5px" width="11" height="10" viewBox="0 0 11 10"><circle cx="3.6" cy="2.4" r="1.8" fill="none" stroke="#e6e6e6" stroke-width="0.9"/><path d="M0.6 9.4 V7.4 Q0.6 5.4 3.6 5.4 Q4.6 5.4 5.2 5.7" fill="none" stroke="#e6e6e6" stroke-width="0.9"/><circle cx="7.8" cy="4.2" r="1.6" fill="none" stroke="#e6e6e6" stroke-width="0.9"/><rect x="5.4" y="6.6" width="5" height="2.9" rx="1.3" fill="none" stroke="#e6e6e6" stroke-width="0.9"/></svg>
<div class="tl" style="left:171.5px;top:359.6px;text-align:left;font-size:6.6px">17</div>
<div class="tl" style="left:133.5px;top:374.2px;width:60px">Participants</div>
<svg class="a" style="left:189.5px;top:363px" width="5" height="4" viewBox="0 0 5 4"><path d="M0.6 3.2 L2.5 1 L4.4 3.2" stroke="#ddd" stroke-width="0.9" fill="none"/></svg>
<svg class="a" style="left:216px;top:359px" width="14" height="13" viewBox="0 0 15 14"><path d="M4.4 2.6 Q4.6 0.8 6.6 0.8 H12 Q14 0.8 14 2.8 V7 Q14 8.8 12.4 9" fill="none" stroke="#e6e6e6" stroke-width="1"/><path d="M2.6 3.6 H9.6 Q11.6 3.6 11.6 5.6 V9.4 Q11.6 11.4 9.6 11.4 H5 L2.4 13 V11.2 Q0.8 11 0.8 9.2 V5.6 Q0.8 3.6 2.6 3.6Z" fill="none" stroke="#e6e6e6" stroke-width="1"/><circle cx="4" cy="7.6" r="0.7" fill="#e6e6e6"/><circle cx="6.2" cy="7.6" r="0.7" fill="#e6e6e6"/><circle cx="8.4" cy="7.6" r="0.7" fill="#e6e6e6"/></svg>
<div class="tl" style="left:193.0px;top:374.2px;width:60px">Chat</div>
<svg class="a" style="left:237.5px;top:363px" width="5" height="4" viewBox="0 0 5 4"><path d="M0.6 3.2 L2.5 1 L4.4 3.2" stroke="#ddd" stroke-width="0.9" fill="none"/></svg>
<svg class="a" style="left:261px;top:360.5px" width="14" height="11" viewBox="0 0 14 11"><path d="M7 10.2 L2 5.6 Q0.5 4 1.3 2.3 Q2.3 0.5 4.2 0.7 Q6 0.9 7 2.6 Q8 0.9 9.8 0.7 Q11.7 0.5 12.7 2.3 Q13.5 4 12 5.6 Z" fill="none" stroke="#e6e6e6" stroke-width="0.95" stroke-linejoin="round"/></svg>
<div class="tl" style="left:238.5px;top:374.2px;width:60px">React</div>
<svg class="a" style="left:281px;top:363px" width="5" height="4" viewBox="0 0 5 4"><path d="M0.6 3.2 L2.5 1 L4.4 3.2" stroke="#ddd" stroke-width="0.9" fill="none"/></svg>
<svg class="a" style="left:310px;top:360px" width="14" height="11" viewBox="0 0 14 11"><rect x="0" y="0" width="14" height="11" rx="2" fill="#10d680"/><path d="M7 8.8 V3.2 M4.4 5.6 L7 2.8 L9.6 5.6" stroke="#000" stroke-width="1.5" fill="none"/></svg>
<div class="tl" style="left:286.5px;top:374.2px;width:60px">Share</div>
<svg class="a" style="left:360px;top:358px" width="14" height="14" viewBox="0 0 14 14"><path d="M6 2.2 Q6.9 6.9 11.4 8 Q6.9 9.1 6 13.8 Q5.1 9.1 0.6 8 Q5.1 6.9 6 2.2Z" fill="#d6eef6"/><path d="M11 0.4 Q11.3 2 12.8 2.4 Q11.3 2.8 11 4.4 Q10.7 2.8 9.2 2.4 Q10.7 2 11 0.4Z" fill="#d6eef6"/></svg>
<div class="tl" style="left:337.5px;top:374.2px;width:60px">AI Companion</div>
<svg class="a" style="left:411.7px;top:358.6px" width="14" height="14" viewBox="0 0 14 14"><circle cx="7" cy="7" r="6.2" fill="none" stroke="#e6e6e6" stroke-width="1.1"/><circle cx="7" cy="4" r="0.9" fill="#e6e6e6"/><path d="M5.6 6 H7.2 V10.4 M5.6 10.4 H8.6" stroke="#e6e6e6" stroke-width="1.1" fill="none"/></svg>
<div class="tl" style="left:389.0px;top:374.2px;width:60px">Meeting info</div>
<svg class="a" style="left:461px;top:359px" width="14" height="14" viewBox="0 0 14 14"><circle cx="7" cy="6.6" r="6.1" fill="none" stroke="#e6e6e6" stroke-width="1.1"/><circle cx="4.2" cy="6.6" r="0.85" fill="#e6e6e6"/><circle cx="7" cy="6.6" r="0.85" fill="#e6e6e6"/><circle cx="9.8" cy="6.6" r="0.85" fill="#e6e6e6"/></svg>
<div class="tl" style="left:438.4px;top:374.2px;width:60px">More</div>
<svg class="a" style="left:526px;top:355px" width="24" height="20" viewBox="0 0 24 20"><path d="M9.3 4.4 H17.6 V14.6 L13.6 16.6 V7 L17.4 4.6" fill="none" stroke="#cc1058" stroke-width="1.2" stroke-linejoin="round"/><g fill="none" stroke-linecap="round" stroke-linejoin="round"><g stroke="#e8e8e8" stroke-width="2.3"><circle cx="9.6" cy="7.2" r="1.4"/><path d="M9.5 9.4 L9 12.6 M9.4 10 L7 11.4 M9.4 10 L11.4 11.8 M9 12.6 L7.2 14.6 L6.8 16.6 M9 12.6 L10.6 14.6 L11 16.6"/></g><g stroke="#000" stroke-width="0.8"><circle cx="9.6" cy="7.2" r="0.5"/><path d="M9.5 9.4 L9 12.6 M9.4 10 L7 11.4 M9.4 10 L11.4 11.8 M9 12.6 L7.2 14.6 L6.8 16.6 M9 12.6 L10.6 14.6 L11 16.6"/></g></g></svg>
<div class="tl" style="left:507.4px;top:374.2px;width:60px">Leave</div>
<div class="a" style="left:0;top:385px;width:735px;height:15px;background:linear-gradient(90deg,#1f3139 0px,#1e3038 300px,#1d2d3e 520px,#1b2945 640px,#1b2945 735px)"></div>
<div class="a" style="left:0;top:385px;width:563px;height:1px;background:#9a9a9a"></div>
<div class="a" style="left:1px;top:386px;width:25.5px;height:14px;background:#1e3a46"></div>
<svg class="a" style="left:9px;top:392px" width="9" height="9" viewBox="0 0 9 9" fill="#f0f0f0"><path d="M0 1.2 L3.8 0.6 V4 H0Z M4.4 0.5 L8.6 0 V4 H4.4Z M0 4.6 H3.8 V8 L0 7.5Z M4.4 4.6 H8.6 V9 L4.4 8.4Z"/></svg>
<div class="a" style="left:26.5px;top:386px;width:154px;height:14px;background:#474747;border-right:1px solid #6a6a6a"></div>
<svg class="a" style="left:33px;top:390px" width="9" height="10" viewBox="0 0 9 10"><circle cx="5.4" cy="3.6" r="2.8" fill="none" stroke="#e6e6e6" stroke-width="0.9"/><path d="M3.4 5.8 L0.6 9" stroke="#e6e6e6" stroke-width="1"/></svg>
<div class="a" style="left:47px;top:391.5px;color:#d6d6d6;font-size:7.9px;line-height:10px;white-space:nowrap">Type here to search</div>
<svg class="a" style="left:189px;top:390px" width="13" height="13" viewBox="0 0 13 13"><circle cx="6.5" cy="6.5" r="6.3" fill="#e8453c"/><path d="M6.5 6.5 L1 9.7 A6.3 6.3 0 0 1 1.1 3.3 Z" fill="#34a853"/><path d="M6.5 6.5 L12.2 3.8 A6.3 6.3 0 0 1 6.5 12.8 L1 9.7Z" fill="#fbbc05"/><path d="M6.5 6.5 L6.5 12.8 A6.3 6.3 0 0 1 1 9.7Z" fill="#34a853"/><circle cx="6.5" cy="6.5" r="3" fill="#fff"/><circle cx="6.5" cy="6.5" r="2.2" fill="#4285f4"/></svg>
<svg class="a" style="left:216px;top:390px" width="13" height="11" viewBox="0 0 13 11"><path d="M3 1 Q4 0 6 0.5 L5 9 Q4 11 1.5 10 Q0 9 1 6Z" fill="#2aa7e0"/><path d="M7 0.5 Q10 0 11.5 2 Q13 5 11.5 9 Q10 11 8 10 L7.5 3Z" fill="#e05aa8"/><path d="M4.6 3 L8.6 3 L8 8 L4 8Z" fill="#8a5ae0"/><path d="M1 6 Q2 9 4 9 L5 6Z" fill="#f5b335"/></svg>
<svg class="a" style="left:241px;top:389.5px" width="13" height="11" viewBox="0 0 13 11"><path d="M0.5 1 H5 L6.2 2.2 H12.5 V11 H0.5Z" fill="#e8b628"/><rect x="0.5" y="3.4" width="12" height="7.6" fill="#f7d04a"/><rect x="4" y="6.4" width="5" height="4.6" fill="#2a7fd4"/></svg>
<svg class="a" style="left:268px;top:390px" width="13" height="10" viewBox="0 0 13 10"><rect x="0.5" y="1" width="12" height="9" fill="#9aa4ae"/><rect x="2" y="0" width="10" height="2" fill="#c0c8d0"/><path d="M1 9 L5 4 L8 7 L10 5 L12 8 V10 H1Z" fill="#d8e4ee"/></svg>
<svg class="a" style="left:295px;top:389.5px" width="12" height="11" viewBox="0 0 12 12"><circle cx="6" cy="6" r="3.6" fill="none" stroke="#f4f4f4" stroke-width="1.6" stroke-dasharray="1.4 1"/><circle cx="6" cy="6" r="3" fill="none" stroke="#f4f4f4" stroke-width="1.2"/></svg>
<svg class="a" style="left:320px;top:390px" width="14" height="10" viewBox="0 0 14 10"><rect x="5" y="0" width="9" height="10" fill="#1a8ce0"/><path d="M6 2 L10 5 L14 2" stroke="#fff" stroke-width="1" fill="none"/><rect x="0" y="1.5" width="7" height="8.5" rx="0.8" fill="#0f64b8"/><ellipse cx="3.5" cy="5.7" rx="1.7" ry="2.2" fill="none" stroke="#fff" stroke-width="1"/></svg>
<svg class="a" style="left:349px;top:389px" width="8" height="11" viewBox="0 0 8 11"><rect x="1.5" y="0" width="5" height="4" fill="#9aa0a6"/><rect x="0.5" y="4" width="7" height="7" fill="#7a7d80"/><rect x="3" y="6" width="2" height="2" fill="#e8541c"/></svg>
<svg class="a" style="left:372px;top:390px" width="14" height="10" viewBox="0 0 14 10"><rect x="0.5" y="2" width="13" height="8" rx="1.5" fill="#8a93a0"/><rect x="4" y="0.5" width="5" height="2" fill="#8a93a0"/><circle cx="7" cy="6" r="3" fill="#c8c0e8"/><circle cx="7" cy="6" r="1.8" fill="#8a6ad8"/></svg>
<svg class="a" style="left:400px;top:389px" width="13" height="11" viewBox="0 0 13 11"><circle cx="6" cy="6" r="5.8" fill="#2a2a2e"/><circle cx="6" cy="6" r="5.2" fill="none" stroke="#dcdcdc" stroke-width="0.8"/><path d="M3 4 Q5 1 8 3 M4 8 Q7 9 9 6" stroke="#dcdcdc" stroke-width="1.1" fill="none"/><circle cx="9.5" cy="9.5" r="3" fill="#e81010"/></svg>
<svg class="a" style="left:426px;top:389.5px" width="13" height="11" viewBox="0 0 13 11"><rect x="0" y="0" width="13" height="11" rx="1" fill="#2f8ae0"/><path d="M0 9 L5 4 L8 7 L10 5 L13 8 V11 H0Z" fill="#a8d8ff"/><circle cx="9" cy="2.8" r="1.3" fill="#e6f4ff"/></svg>
<div class="a" style="left:446px;top:386px;width:26px;height:14px;background:#a5652f"></div>
<div class="a" style="left:452.5px;top:390.5px;width:13px;height:12px;background:#1560f0;border-radius:4px;color:#fff;font-weight:bold;font-size:5.5px;line-height:10px;text-align:center;letter-spacing:-0.3px">zm</div>
<svg class="a" style="left:610.5px;top:392.5px" width="7" height="4" viewBox="0 0 7 4"><path d="M0.6 3.6 L3.5 0.8 L6.4 3.6" stroke="#e6e6e6" stroke-width="0.9" fill="none"/></svg>
<svg class="a" style="left:623px;top:390.5px" width="7" height="10" viewBox="0 0 7 10"><rect x="1.8" y="0" width="3.4" height="6" rx="0.6" fill="#e6e6e6"/><path d="M0.6 4.6 Q0.8 7.6 3.5 7.7 Q6.2 7.6 6.4 4.6 M3.5 7.7 V10" stroke="#e6e6e6" stroke-width="0.8" fill="none"/></svg>
<svg class="a" style="left:637px;top:393px" width="8" height="7" viewBox="0 0 8 7"><path d="M0.5 6.5 Q0.5 0.5 7 0.5 M2 6.5 Q2 2 7 2 M3.5 6.5 Q3.5 3.5 7 3.5" stroke="#c8c8c8" stroke-width="0.7" fill="none"/></svg>
<svg class="a" style="left:648px;top:392.5px" width="10" height="6" viewBox="0 0 10 6"><path d="M1.5 0 V2 M0.5 0.8 H2.5" stroke="#e6e6e6" stroke-width="0.8"/><rect x="2.5" y="1.2" width="6.5" height="4.3" fill="none" stroke="#e6e6e6" stroke-width="0.9"/><rect x="3.4" y="2.1" width="4.8" height="2.6" fill="#e6e6e6"/></svg>
<svg class="a" style="left:660.5px;top:392px" width="9" height="8" viewBox="0 0 9 8"><path d="M0.5 2.5 H2.5 L5 0.4 V7.6 L2.5 5.5 H0.5Z" fill="none" stroke="#e6e6e6" stroke-width="0.8"/><path d="M6.4 2.2 Q7.4 4 6.4 5.8 M7.8 1 Q9.2 4 7.8 7" stroke="#e6e6e6" stroke-width="0.7" fill="none"/></svg>
<div class="a" style="left:676px;top:387px;color:#f0f0f0;font-size:6.2px;line-height:8px;white-space:nowrap">10:51 AM</div>
<div class="a" style="left:675px;top:396.8px;color:#f0f0f0;font-size:6.2px;line-height:8px;white-space:nowrap">4/22/2025</div>
<svg class="a" style="left:703.5px;top:387.5px" width="7" height="10" viewBox="0 0 7 10"><path d="M0.5 0.5 V8.5 L2.4 6.8 L3.8 9.6 L5 9 L3.7 6.3 L6.3 6.2Z" fill="#f4f4f4" stroke="#222" stroke-width="0.5"/></svg>
<svg class="a" style="left:713px;top:391.5px" width="9" height="9" viewBox="0 0 9 9"><path d="M0.5 0.5 H8.5 V6.5 H4 L2 8.5 V6.5 H0.5Z" fill="none" stroke="#e6e6e6" stroke-width="0.9"/><path d="M2 2.5 H7 M2 4.5 H7" stroke="#e6e6e6" stroke-width="0.8"/></svg>
<div class="a" style="left:563px;top:17px;width:170px;height:368px;background:#fff"></div>
<div class="a" style="left:563px;top:17px;width:170px;height:24px;background:#eef1f5"></div>
<div class="a" style="left:561px;top:17px;width:2px;height:336px;background:#030303"></div>
<div class="a" style="left:563px;top:17px;width:170px;height:1px;background:#8e9092"></div>
<div class="a" style="left:563px;top:18px;width:1px;height:23px;background:#fff"></div>
<div class="a" style="left:563px;top:24.5px;width:144px;text-align:center;color:#232333;font-weight:bold;font-size:7px;line-height:9px">Participants (17)</div>
<svg class="a" style="left:707px;top:25px" width="8" height="8" viewBox="0 0 8 8"><path d="M3.6 0.8 H1.6 Q0.6 0.8 0.6 1.8 V6.4 Q0.6 7.4 1.6 7.4 H6.2 Q7.2 7.4 7.2 6.4 V4.4" fill="none" stroke="#6e7680" stroke-width="0.9"/><path d="M3.4 4.6 L7.2 0.8 M4.6 0.7 H7.3 V3.4" fill="none" stroke="#6e7680" stroke-width="0.9"/></svg>
<svg class="a" style="left:722px;top:25.5px" width="7" height="7" viewBox="0 0 7 7"><path d="M0.5 0.5 L6.5 6.5 M6.5 0.5 L0.5 6.5" stroke="#777" stroke-width="0.8"/></svg>
<div class="a" style="left:573px;top:46px;width:153px;height:17.5px;border:1px solid #d2d2e0;border-radius:5px;background:#fff"></div>
<svg class="a" style="left:578.5px;top:51.5px" width="7" height="7" viewBox="0 0 7 7"><circle cx="3" cy="3" r="2.3" fill="none" stroke="#777" stroke-width="0.8"/><path d="M4.7 4.7 L6.6 6.6" stroke="#777" stroke-width="0.9"/></svg>
<div class="a" style="left:588px;top:50px;color:#7a7a80;font-size:7px;line-height:9px">Find a participant</div>
<div class="a" style="left:0;top:0;width:735px;height:144.5px;overflow:hidden"><svg class="a" style="left:572px;top:65px" width="20" height="20" viewBox="0 0 20 20"><path d="M4 7.6 H6 V13.4 M3 13.6 H12.2 M8.6 13.5 V5 Q8.6 3.5 10.1 3.5 Q11.6 3.5 11.6 5 V13.5" fill="none" stroke="#3f72c0" stroke-width="0.9"/><path d="M3.3 6.2 L5 5 M12.6 17 V7.3 H16.4 M15.6 7.3 V14" fill="none" stroke="#d9474b" stroke-width="0.9"/></svg><div class="a ptx" style="left:596px;top:71px">The Office of the Informat... (Me)</div><svg class="a" style="left:702px;top:71.5px" width="5" height="9" viewBox="0 0 5 9"><rect x="1" y="0.5" width="3" height="5" rx="1.5" fill="#6b6b70" stroke="#6b6b70" stroke-width="0.8"/><path d="M0.4 4 Q0.5 6.6 2.5 6.7 Q4.5 6.6 4.6 4 M2.5 6.7 V8.6" stroke="#6b6b70" stroke-width="0.8" fill="none"/></svg><svg class="a" style="left:713px;top:72.5px" width="10" height="6" viewBox="0 0 10 6"><rect x="0.5" y="0.5" width="6.5" height="5" rx="0.8" fill="none" stroke="#6b6b70" stroke-width="0.8"/><path d="M7 2 L9.4 0.8 V5.2 L7 4" fill="none" stroke="#6b6b70" stroke-width="0.8"/></svg><div class="a pav" style="left:575.5px;top:91px;background:#f29a1c">BT</div><div class="a ptx" style="left:596px;top:93px">Bora Tafa IDP (Host)</div><svg class="a" style="left:700.5px;top:93px" width="9" height="9" viewBox="0 0 9 9"><path d="M3.4 0.8 Q4.5 0 5.6 0.8 V4.2 Q4.5 5.2 3.4 4.2Z" fill="none" stroke="#e5484d" stroke-width="0.8"/><path d="M2 3.8 Q2.2 6.2 4.5 6.3 Q6.8 6.2 7 3.8 M4.5 6.3 V8.2 M3 8.4 H6" stroke="#e5484d" stroke-width="0.8" fill="none"/><path d="M1 8.4 L8.2 0.6" stroke="#e5484d" stroke-width="0.9"/></svg><svg class="a" style="left:712.5px;top:93.5px" width="10" height="8" viewBox="0 0 10 8"><rect x="0.5" y="1.5" width="6.5" height="5.5" rx="1" fill="none" stroke="#e5484d" stroke-width="0.8"/><path d="M7 3.4 L9.4 2 V6.6 L7 5.2" fill="none" stroke="#e5484d" stroke-width="0.8"/><path d="M0.6 7.6 L9 0.4" stroke="#e5484d" stroke-width="0.9"/></svg><div class="a pav" style="left:575.5px;top:112.5px;background:#8a3fb4">E</div><div class="a ptx" style="left:596px;top:115px">eris</div><svg class="a" style="left:702.5px;top:115.5px" width="5" height="9" viewBox="0 0 5 9"><rect x="1" y="0.5" width="3" height="5" rx="1.5" fill="none" stroke="#6b6b70" stroke-width="0.8"/><path d="M0.4 4 Q0.5 6.6 2.5 6.7 Q4.5 6.6 4.6 4 M2.5 6.7 V8.6" stroke="#6b6b70" stroke-width="0.8" fill="none"/></svg><svg class="a" style="left:712.5px;top:115.5px" width="10" height="8" viewBox="0 0 10 8"><rect x="0.5" y="1.5" width="6.5" height="5.5" rx="1" fill="none" stroke="#e5484d" stroke-width="0.8"/><path d="M7 3.4 L9.4 2 V6.6 L7 5.2" fill="none" stroke="#e5484d" stroke-width="0.8"/><path d="M0.6 7.6 L9 0.4" stroke="#e5484d" stroke-width="0.9"/></svg><div class="a pav" style="left:575.5px;top:134.5px;background:#c83a2c">AA</div><div class="a ptx" style="left:596px;top:137px">Alketa Arapi</div><svg class="a" style="left:712.5px;top:136.5px" width="9" height="9" viewBox="0 0 9 9"><path d="M3.4 0.8 Q4.5 0 5.6 0.8 V4.2 Q4.5 5.2 3.4 4.2Z" fill="none" stroke="#e5484d" stroke-width="0.8"/><path d="M2 3.8 Q2.2 6.2 4.5 6.3 Q6.8 6.2 7 3.8 M4.5 6.3 V8.2 M3 8.4 H6" stroke="#e5484d" stroke-width="0.8" fill="none"/><path d="M1 8.4 L8.2 0.6" stroke="#e5484d" stroke-width="0.9"/></svg></div>
<div class="a" style="left:728.5px;top:64px;width:4.5px;height:80.5px;background:#f1f1f4"></div>
<div class="a" style="left:728.5px;top:197px;width:4.5px;height:110px;background:#f1f1f4"></div>
<div class="a" style="left:730px;top:65px;width:3px;height:20px;background:#a9a9ad;border-radius:1.5px"></div>
<div class="a pbtn" style="left:575px;top:154px;width:29.5px">Invite</div>
<div class="a pbtn" style="left:616px;top:154px;width:41px">Mute me</div>
<div class="a pbtn" style="left:669px;top:154px;width:53px">Reclaim host</div>
<div class="a" style="left:563px;top:174px;width:170px;height:22.6px;background:#eef1f5"></div>
<svg class="a" style="left:577px;top:181px" width="10" height="9" viewBox="0 0 10 9"><path d="M2.6 1.8 Q2.8 0.5 4.2 0.5 H8.2 Q9.5 0.5 9.5 1.8 V4.4 Q9.5 5.6 8.4 5.8" fill="none" stroke="#1a73e8" stroke-width="0.8"/><path d="M1.6 2.6 H6.4 Q7.6 2.6 7.6 3.8 V6.2 Q7.6 7.4 6.4 7.4 H3.4 L1.6 8.6 V7.3 Q0.5 7.2 0.5 6 V3.8 Q0.5 2.6 1.6 2.6Z" fill="none" stroke="#1a73e8" stroke-width="0.8"/></svg>
<div class="a" style="left:588.5px;top:181.5px;color:#1a6fe0;font-weight:bold;font-size:7px;line-height:9px;white-space:nowrap">Trajnim i Koordinatorëve ...</div>
<svg class="a" style="left:693px;top:184.5px" width="9" height="2" viewBox="0 0 9 2" fill="#5e6670"><circle cx="1" cy="1" r="0.85"/><circle cx="4.3" cy="1" r="0.85"/><circle cx="7.6" cy="1" r="0.85"/></svg>
<svg class="a" style="left:707px;top:182px" width="8" height="8" viewBox="0 0 8 8"><path d="M3.6 0.8 H1.6 Q0.6 0.8 0.6 1.8 V6.4 Q0.6 7.4 1.6 7.4 H6.2 Q7.2 7.4 7.2 6.4 V4.4" fill="none" stroke="#5e6670" stroke-width="1.15"/><path d="M3.4 4.6 L7.2 0.8 M4.6 0.7 H7.3 V3.4" fill="none" stroke="#5e6670" stroke-width="1.1"/></svg>
<svg class="a" style="left:722px;top:182.5px" width="7" height="7" viewBox="0 0 7 7"><path d="M0.5 0.5 L6.5 6.5 M6.5 0.5 L0.5 6.5" stroke="#777" stroke-width="0.8"/></svg>
<div class="a" style="left:590px;top:198px;color:#3d86ea;font-size:6.9px;line-height:8px;white-space:nowrap">Eljon Begolli <span style="color:#8a8a8a;font-size:5.9px">10:46 AM</span></div>
<div class="a pav" style="left:570px;top:207px;background:#e0561c;border-radius:4px;font-weight:normal;font-size:6.5px">EB</div>
<div class="a" style="left:0;top:0;width:735px;height:307px;overflow:hidden"><div class="a" style="left:587px;top:206.5px;width:116px;height:110px;background:#f1f1f5;border-radius:5px"></div><div class="a" style="left:592px;top:211.1px;color:#1f1f24;font-size:8.1px;line-height:10.9px;white-space:nowrap">Pershendetje dhe<br>Faleminderit per kete takim<br>qe keni organizuar! desha te<br>pyesja ju lutem : a mund, qe<br>Koordinatori per te drejten<br>per Informim te kete akses<br>per ta percjelle regjistrin e<br>kerkese-pergjigjeve dhe<br>informacione te tjera te<br>lidhura me to</div></div>
<div class="a" style="left:729px;top:279.5px;width:3.5px;height:8.5px;background:#a9a9ad;border-radius:1.5px"></div>
<div class="a" style="left:563px;top:307px;width:170px;height:13px;background:#f4f5f8"></div>
<svg class="a" style="left:603px;top:309px" width="9" height="9" viewBox="0 0 9 9"><circle cx="3.6" cy="2.4" r="1.8" fill="none" stroke="#777" stroke-width="0.8"/><path d="M0.6 8 Q0.8 5 3.6 5 Q5 5 5.6 5.6" fill="none" stroke="#777" stroke-width="0.8"/><circle cx="6.8" cy="7" r="1.8" fill="#1a73e8"/></svg>
<div class="a" style="left:613px;top:309.5px;color:#686870;font-size:6.1px;line-height:8px;white-space:nowrap">Who can see your messages?</div>
<div class="a" style="left:569.5px;top:330.5px;color:#222;font-size:6.6px;line-height:8px">To:</div>
<div class="a" style="left:583px;top:328.5px;width:70px;height:12px;background:#0e5fe8;border-radius:3px;color:#fff;font-size:6.4px;line-height:12px;padding-left:4px;white-space:nowrap">Meeting group chat </div>
<svg class="a" style="left:646.5px;top:333.5px" width="5" height="4" viewBox="0 0 5 4"><path d="M0.7 0.9 L2.5 2.8 L4.3 0.9" fill="none" stroke="#fff" stroke-width="1"/></svg>
<div class="a" style="left:567.5px;top:345.6px;color:#85858c;font-size:8.1px;line-height:10.2px;white-space:nowrap">Message Trajnim i Koordinatorëve për të<br>Drejtën e Informimit për Rregjistrin</div>
<svg class="a" style="left:571px;top:370px" width="8" height="8" viewBox="0 0 8 8"><path d="M0.5 1 H4.5 M2.5 1 V5 M3 7 L7.4 2.6 L6.6 1.8 L2.2 6.2Z" fill="none" stroke="#74747a" stroke-width="0.8"/></svg>
<svg class="a" style="left:589px;top:370.5px" width="8" height="8" viewBox="0 0 8 8"><circle cx="4" cy="4" r="3.4" fill="none" stroke="#74747a" stroke-width="0.8"/><path d="M2.3 4.6 Q4 6 5.7 4.6" fill="none" stroke="#74747a" stroke-width="0.7"/><circle cx="2.8" cy="3" r="0.45" fill="#74747a"/><circle cx="5.2" cy="3" r="0.45" fill="#74747a"/></svg>
<svg class="a" style="left:607.5px;top:370px" width="7" height="9" viewBox="0 0 7 9"><path d="M0.5 0.5 H4.4 L6.5 2.6 V8.5 H0.5Z" fill="none" stroke="#74747a" stroke-width="0.8"/></svg>
<svg class="a" style="left:624px;top:370px" width="9" height="9" viewBox="0 0 9 9"><path d="M5.5 0.5 H1.5 Q0.5 0.5 0.5 1.5 V6.5 Q0.5 7.5 1.5 7.5 H4 M7.5 3.5 V5" fill="none" stroke="#74747a" stroke-width="0.8"/><path d="M6.8 5.8 V8.6 M5.4 7.2 H8.2" stroke="#74747a" stroke-width="0.8"/></svg>
<svg class="a" style="left:640px;top:373px" width="5" height="4" viewBox="0 0 5 4"><path d="M0.6 0.8 L2.5 2.8 L4.4 0.8" fill="none" stroke="#74747a" stroke-width="0.8"/></svg>
<div class="a" style="left:716px;top:369px;width:12.5px;height:12px;background:#ececf0;border-radius:3px"></div>
<svg class="a" style="left:718.5px;top:372px" width="8" height="6" viewBox="0 0 8 6"><path d="M0.4 0.4 H7.6 L5 5.6 L4 2.6Z" fill="#9a9aa0"/></svg>
<div class="a" style="left:0;top:0;width:1px;height:400px;background:#d8bc00"></div><div class="a" style="left:1px;top:17px;width:1px;height:336px;background:#050505"></div>
<div class="a" style="left:733px;top:17px;width:1px;height:368px;background:#8a8a8a"></div><div class="a" style="left:734px;top:0;width:1px;height:400px;background:#f0d830"></div>
</body></html>
